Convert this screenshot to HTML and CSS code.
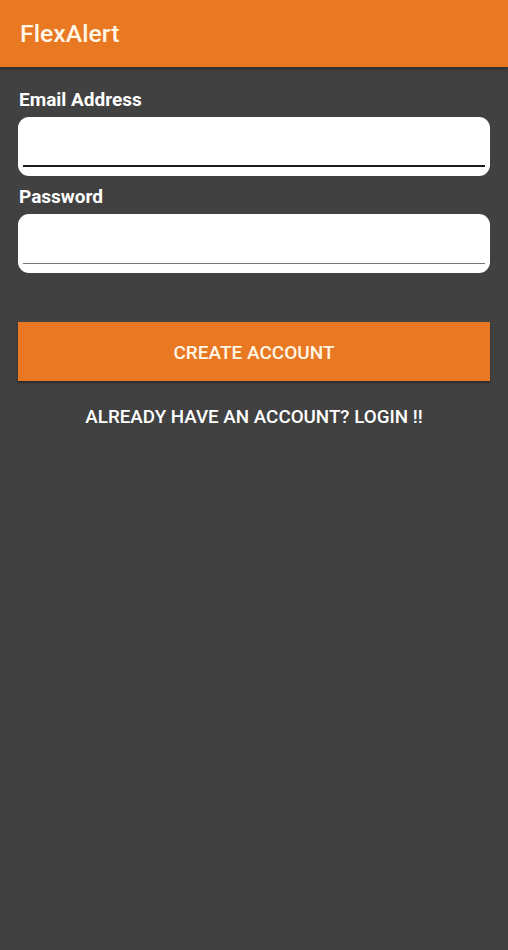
FILE: index.html
```html
<!DOCTYPE html>
<html lang="en">
<head>
<meta charset="utf-8">
<title>FlexAlert</title>
<link rel="stylesheet" href="styles.css">
</head>
<body>
<header class="appbar"><h1 class="title">FlexAlert</h1></header>
<main class="form">
  <label class="label" for="email">Email Address</label>
  <div class="field"><input id="email" class="input focused" type="email"></div>
  <label class="label label-pw" for="pw">Password</label>
  <div class="field"><input id="pw" class="input" type="password"></div>
  <button class="btn" type="button">CREATE ACCOUNT</button>
  <p class="link">ALREADY HAVE AN ACCOUNT? LOGIN !!</p>
</main>
</body>
</html>
```
FILE: styles.css
```css
html, body { margin: 0; padding: 0; }
body {
  background: #414141;
  font-family: Roboto, "Noto Sans", "Liberation Sans", sans-serif;
  width: 508px;
  min-height: 950px;
}
.appbar {
  height: 67px;
  background: #e97823;
  box-shadow: 0 2px 3px rgba(0,0,0,0.35);
  display: flex;
  align-items: center;
  padding-left: 20px;
  box-sizing: border-box;
}
.title {
  margin: 0;
  font-size: 24.8px;
  font-weight: 500;
  color: #fff6e6;
}
.form {
  display: flex;
  flex-direction: column;
  padding: 19px 18px 0 18px;
}
.label {
  font-size: 19px;
  font-weight: 700;
  color: #fff;
  line-height: 27px;
  padding-left: 1px;
  margin-bottom: 4px;
}
.label-pw { margin-top: 7px; }
.field {
  background: #fff;
  border-radius: 11px;
  height: 59px;
  padding: 0 5px;
  box-sizing: border-box;
  display: flex;
  align-items: flex-end;
}
.input {
  width: 100%;
  border: none;
  outline: none;
  background: transparent;
  height: 44px;
  margin-bottom: 9px;
  border-bottom: 1px solid #777;
  padding: 0;
  font: inherit;
}
.input.focused {
  border-bottom: 2px solid #1c1c1c;
  margin-bottom: 9px;
}
.btn {
  margin-top: 49px;
  height: 59px;
  background: #e97823;
  border: none;
  color: #fff6e6;
  font-family: inherit;
  font-size: 19px;
  font-weight: 500;
  box-shadow: 0 2px 2px rgba(0,0,0,0.35);
  padding: 2px 0 0 0;
}
.link {
  margin: 24px 0 0 0;
  text-align: center;
  color: #fff;
  font-size: 18.8px;
  font-weight: 500;
  line-height: 24px;
}
```
